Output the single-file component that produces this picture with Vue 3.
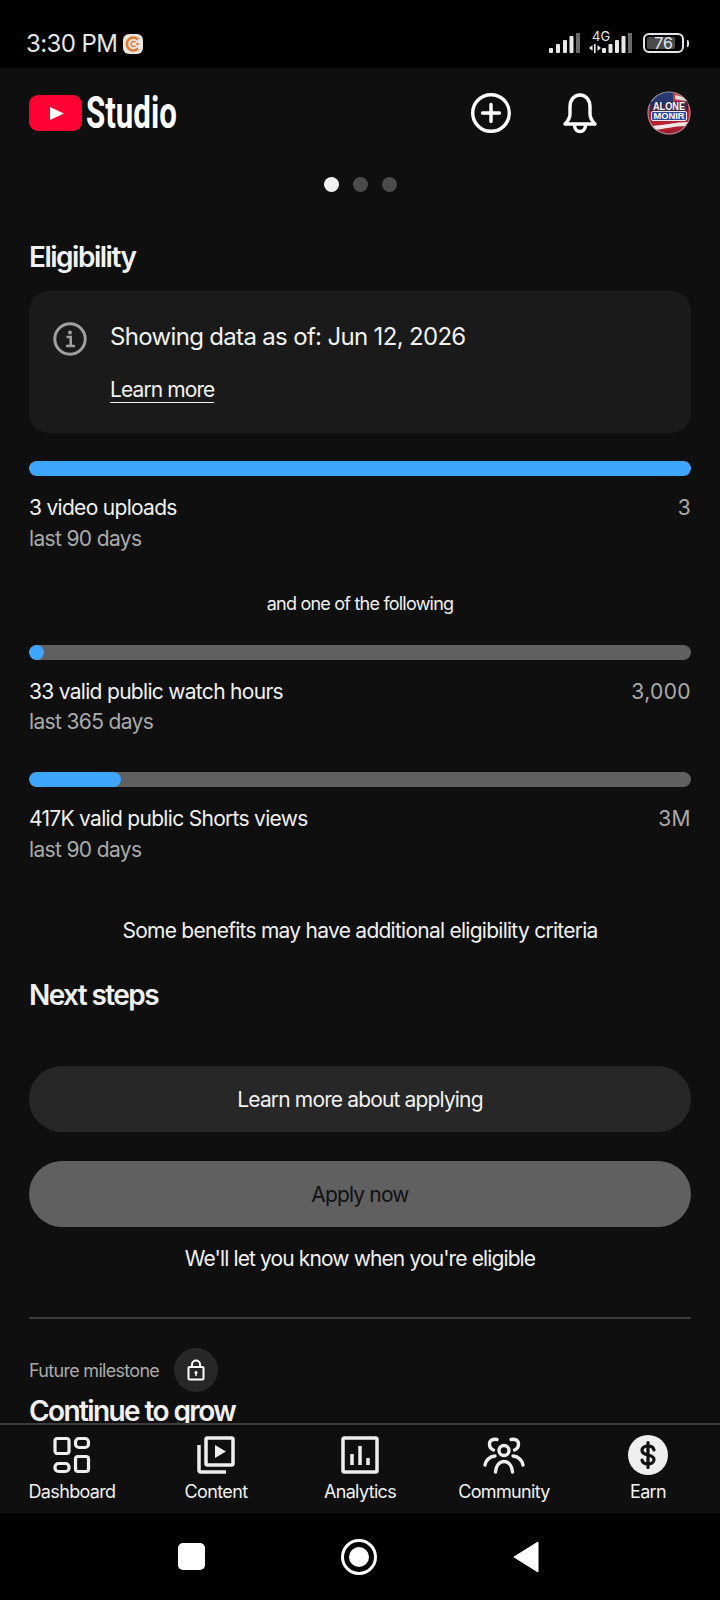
<template>
  <div class="screen">
    <div class="status-bar">
      <div class="status-left">
        <span class="time">3:30 PM</span>
        <svg class="app-badge" width="20" height="20" viewBox="0 0 20 20">
          <rect x="0" y="0" width="20" height="20" rx="6" fill="#e9e4de" />
          <path d="M15 5.500a6.500 6.500 0 1 0 0 9" fill="none" stroke="#e07a35" stroke-width="2.600" />
          <path d="M12.500 8.200a2.600 2.600 0 1 0 0 3.600" fill="none" stroke="#e07a35" stroke-width="1.400" />
          <circle cx="14.500" cy="10" r="1.300" fill="#e07a35" />
        </svg>
      </div>
      <div class="status-right">
        <svg width="31" height="20" viewBox="0 0 31 20">
          <rect x="0" y="15" width="4" height="5" rx="1" fill="#e8e8e8" />
          <rect x="7" y="11" width="4" height="9" rx="1" fill="#e8e8e8" />
          <rect x="14" y="7" width="4" height="13" rx="1" fill="#e8e8e8" />
          <rect x="20.500" y="3" width="4" height="17" rx="1" fill="#e8e8e8" />
          <rect x="27" y="0" width="4" height="20" fill="#6a6a6a" />
        </svg>
        <div class="net">
          <span class="net-label">4G</span>
          <svg width="43" height="20" viewBox="0 0 43 20">
            <path d="M0 15l3.500-3v6zM5 11h1.600v9H5zM8.500 12l3.500 3-3.500 3z" fill="#e8e8e8" />
            <rect x="13" y="15" width="4" height="5" rx="1" fill="#e8e8e8" />
            <rect x="19.500" y="11" width="4" height="9" rx="1" fill="#e8e8e8" />
            <rect x="26" y="7" width="4" height="13" rx="1" fill="#e8e8e8" />
            <rect x="32.500" y="3" width="4" height="17" rx="1" fill="#e8e8e8" />
            <rect x="39" y="0" width="4" height="20" fill="#6a6a6a" />
          </svg>
        </div>
        <div class="battery">
          <div class="battery-body">
            <div class="battery-fill"></div>
            <span class="battery-num">76</span>
          </div>
          <div class="battery-cap"></div>
        </div>
      </div>
    </div>

    <header class="header">
      <div class="logo">
        <svg width="53" height="36" viewBox="0 0 53 36">
          <rect width="53" height="36" rx="9" fill="#ff0033" />
          <path d="M21 12l14 6.500-14 6.500z" fill="#fff" />
        </svg>
        <span class="logo-text">Studio</span>
      </div>
      <div class="header-actions">
        <svg class="ic-plus" width="40" height="40" viewBox="0 0 40 40" fill="none" stroke="#fff" stroke-width="3.400">
          <circle cx="20" cy="20" r="18.300" />
          <path d="M20 11.500v17M11.500 20h17" stroke-linecap="round" />
        </svg>
        <svg class="ic-bell" width="36" height="42" viewBox="0 0 36 42" fill="none" stroke="#fff" stroke-width="3.400" stroke-linejoin="round">
          <path d="M3 32c3-3 5-5.500 5-10v-7C8 8 12 3 18 3s10 5 10 12v7c0 4.500 2 7 5 10z" />
          <path d="M12.500 33c0 4 2.500 6.500 5.500 6.500s5.500-2.500 5.500-6.500" />
        </svg>
        <svg class="avatar" width="44" height="44" viewBox="0 0 44 44">
          <defs>
            <clipPath id="av"><circle cx="22" cy="22" r="21.500" /></clipPath>
          </defs>
          <g clip-path="url(#av)">
            <rect width="44" height="44" fill="#b3212f" />
            <rect y="0" width="44" height="13" fill="#26386e" />
            <path d="M26 0l18 6v7H26z" fill="#c83a46" />
            <path d="M28 4l16 4v3L28 8z" fill="#e6dcdc" />
            <path d="M0 29h44v3C30 33 16 35 3 39z" fill="#b3212f" />
            <path d="M5 35c12-1 24-4 36-4l-3 4c-10 0-21 3-30 4z" fill="#f0e8e8" />
            <path d="M8 40c10 0 22-2 30-4v8H8z" fill="#a01f2d" />
          </g>
          <circle cx="22" cy="22" r="21" fill="none" stroke="#a8a8b0" stroke-width="1.200" opacity=".75" />
          <rect x="3" y="10.500" width="38" height="10" fill="#1f2a52" opacity=".75" />
          <rect x="4.500" y="20.500" width="35" height="9" rx="1.500" fill="#2c4a9e" stroke="#e8e8f0" stroke-width="1" />
          <text x="22" y="18.500" class="av-top" text-anchor="middle" textLength="32" lengthAdjust="spacingAndGlyphs">ALONE</text>
          <text x="22" y="28" class="av-bot" text-anchor="middle" textLength="31" lengthAdjust="spacingAndGlyphs">MONIR</text>
        </svg>
      </div>
    </header>

    <main class="content">
      <div class="dots">
        <span class="dot active"></span>
        <span class="dot"></span>
        <span class="dot"></span>
      </div>

      <h2 class="title">Eligibility</h2>

      <div class="info-card">
        <svg class="info-icon" width="34" height="34" viewBox="0 0 34 34" fill="none">
          <circle cx="17" cy="17" r="15.200" stroke="#a0a0a0" stroke-width="3" />
          <circle cx="17" cy="10.500" r="2" fill="#a0a0a0" />
          <path d="M13.500 15h4.200v8.500M13 24h9" stroke="#a0a0a0" stroke-width="2.600" />
        </svg>
        <div class="info-body">
          <div class="info-text">Showing data as of: Jun 12, 2026</div>
          <a class="info-link">Learn more</a>
        </div>
      </div>

      <div class="metric">
        <div class="bar"><div class="bar-fill" :style="{ width: '100%' }"></div></div>
        <div class="metric-row">
          <span class="metric-name">3 video uploads</span>
          <span class="metric-goal">3</span>
        </div>
        <div class="metric-sub">last 90 days</div>
      </div>

      <div class="or-line">and one of the following</div>

      <div class="metric">
        <div class="bar"><div class="bar-fill" :style="{ width: '2.2%' }"></div></div>
        <div class="metric-row">
          <span class="metric-name">33 valid public watch hours</span>
          <span class="metric-goal">3,000</span>
        </div>
        <div class="metric-sub">last 365 days</div>
      </div>

      <div class="metric metric-last">
        <div class="bar"><div class="bar-fill" :style="{ width: '13.9%' }"></div></div>
        <div class="metric-row">
          <span class="metric-name">417K valid public Shorts views</span>
          <span class="metric-goal">3M</span>
        </div>
        <div class="metric-sub">last 90 days</div>
      </div>

      <div class="benefits">Some benefits may have additional eligibility criteria</div>

      <h2 class="title next-title">Next steps</h2>

      <button class="pill pill-dark">Learn more about applying</button>
      <button class="pill pill-disabled">Apply now</button>
      <div class="eligible-note">We'll let you know when you're eligible</div>

      <div class="divider"></div>

      <div class="milestone">
        <span class="milestone-label">Future milestone</span>
        <span class="lock">
          <svg width="18" height="22" viewBox="0 0 18 22" fill="none" stroke="#fff" stroke-width="2">
            <rect x="1.500" y="8" width="15" height="12.500" rx="1" />
            <path d="M5 8V5.500a4 4 0 0 1 8 0V8" />
            <circle cx="9" cy="13.500" r="1.500" fill="#fff" stroke="none" />
            <path d="M9 14v3" stroke-width="1.400" />
          </svg>
        </span>
      </div>
      <h2 class="title grow-title">Continue to grow</h2>
    </main>

    <nav class="tabs">
      <div class="tab">
        <svg width="38" height="38" viewBox="0 0 38 38" fill="none" stroke="#eee" stroke-width="3.200">
          <rect x="2" y="2.500" width="14" height="15" rx="2.500" />
          <rect x="22.500" y="2.500" width="13" height="9" rx="3.500" />
          <rect x="2" y="27.500" width="14" height="8" rx="3.500" />
          <rect x="22.500" y="20.500" width="13" height="15" rx="2.500" />
        </svg>
        <span>Dashboard</span>
      </div>
      <div class="tab">
        <svg width="38" height="38" viewBox="0 0 38 38" fill="none" stroke="#eee" stroke-width="3.500">
          <rect x="9" y="2" width="27" height="27" rx="1.500" />
          <path d="M2 9v25a2 2 0 0 0 2 2h25" />
          <path d="M18 9l11 6.500-11 6.500z" fill="#eee" stroke="none" />
        </svg>
        <span>Content</span>
      </div>
      <div class="tab">
        <svg width="38" height="38" viewBox="0 0 38 38" fill="none" stroke="#eee" stroke-width="3.500">
          <rect x="2" y="2" width="34" height="34" rx="1.500" />
          <path d="M11 18v11M19 10v19M27 22v7" />
        </svg>
        <span>Analytics</span>
      </div>
      <div class="tab">
        <svg width="44" height="38" viewBox="0 0 44 38" fill="none" stroke="#eee" stroke-width="3.400" stroke-linecap="round">
          <circle cx="22" cy="14.500" r="5" />
          <path d="M13.500 36c0-6 4-10.500 8.500-10.500s8.500 4.500 8.500 10.500" />
          <path d="M15 3.500c-4-1-7.500 1-7.500 4.500 0 3 1.500 5 4 6" />
          <path d="M29 3.500c4-1 7.500 1 7.500 4.500 0 3-1.500 5-4 6" />
          <path d="M3 29c.5-4 4-8.500 10-9" />
          <path d="M41 29c-.5-4-4-8.500-10-9" />
        </svg>
        <span>Community</span>
      </div>
      <div class="tab">
        <svg width="40" height="40" viewBox="0 0 40 40">
          <circle cx="20" cy="20" r="20" fill="#eee" />
          <path d="M26 15c-.5-2.500-3-4-6-4s-6 1.500-6 4.500c0 6 12 3 12 9 0 3-3 4.500-6 4.500s-5.500-1.500-6-4M20 7.500v25" fill="none" stroke="#111" stroke-width="3.200" stroke-linecap="round" />
        </svg>
        <span>Earn</span>
      </div>
    </nav>

    <div class="system-nav">
      <div class="sys-square"></div>
      <div class="sys-circle"><div class="sys-circle-in"></div></div>
      <svg width="26" height="32" viewBox="0 0 26 32"><path d="M25 1v30L1 16z" fill="#fff" stroke="#fff" stroke-width="1" stroke-linejoin="round" /></svg>
    </div>
  </div>
</template>

<script setup>
</script>

<style>
html, body {
  margin: 0;
  background: #000;
}
</style>

<style scoped>
.screen {
  width: 720px;
  height: 1600px;
  display: flex;
  flex-direction: column;
  background: #0f0f0f;
  color: #f1f1f1;
  font-family: Inter, "Noto Sans", sans-serif;
  overflow: hidden;
}

.status-bar {
  height: 68px;
  flex: none;
  background: #000;
  display: flex;
  justify-content: space-between;
  align-items: flex-start;
  padding: 30px 31px 0 26px;
  box-sizing: border-box;
}
.status-left {
  display: flex;
  align-items: center;
  gap: 6px;
}
.time {
  font-size: 24px;
  line-height: 28px;
  color: #e6e6e6;
  letter-spacing: -0.6px;
}
.status-right {
  display: flex;
  align-items: flex-end;
  gap: 9px;
  margin-top: 3px;
}
.net {
  position: relative;
}
.net-label {
  position: absolute;
  top: -3px;
  left: 3px;
  font-size: 13px;
  line-height: 13px;
  color: #e6e6e6;
}
.net svg,
.status-right > svg {
  display: block;
}
.battery {
  display: flex;
  align-items: center;
  gap: 3px;
  margin-left: 2px;
}
.battery-body {
  position: relative;
  width: 41px;
  height: 20px;
  border: 2px solid #e6e6e6;
  border-radius: 6px;
  box-sizing: border-box;
}
.battery-fill {
  position: absolute;
  left: 2px;
  top: 2px;
  bottom: 2px;
  width: 28px;
  background: #4a4a4a;
  border-radius: 2px;
}
.battery-num {
  position: relative;
  display: block;
  text-align: center;
  font-size: 16px;
  line-height: 16px;
  color: #e6e6e6;
}
.battery-cap {
  width: 2px;
  height: 7px;
  background: #e6e6e6;
  border-radius: 0 2px 2px 0;
}

.header {
  height: 90px;
  flex: none;
  display: flex;
  justify-content: space-between;
  align-items: center;
  padding: 0 29px;
  box-sizing: border-box;
}
.logo {
  display: flex;
  align-items: center;
  gap: 4px;
}
.logo svg {
  display: block;
}
.logo-text {
  display: inline-block;
  font-family: Roboto, sans-serif;
  font-weight: 700;
  font-size: 44px;
  line-height: 44px;
  color: #fff;
  transform: scaleX(0.71);
  transform-origin: left center;
  width: 96px;
}
.header-actions {
  display: flex;
  align-items: center;
}
.header-actions svg {
  display: block;
}
.ic-plus {
  margin-right: 51px;
}
.ic-bell {
  margin-right: 49px;
}
.av-top {
  font-family: "Liberation Sans", sans-serif;
  font-size: 10px;
  font-weight: 700;
  fill: #fff;
}
.av-bot {
  font-family: "Liberation Sans", sans-serif;
  font-size: 9px;
  font-weight: 700;
  fill: #fff;
}

.content {
  flex: 1;
  min-height: 0;
  overflow: hidden;
  padding: 0 29px;
}
.dots {
  display: flex;
  justify-content: center;
  gap: 14px;
  margin-top: 19px;
}
.dot {
  width: 15px;
  height: 15px;
  border-radius: 50%;
  background: #4b4b4b;
}
.dot.active {
  background: #f1f1f1;
}
.title {
  margin: 0;
  font-size: 28px;
  line-height: 34px;
  font-weight: 600;
  letter-spacing: -1.6px;
  color: #f1f1f1;
}
.dots + .title {
  margin-top: 48px;
  letter-spacing: -1.5px;
}
.info-card {
  margin-top: 17px;
  height: 142px;
  box-sizing: border-box;
  background: #1a1a1a;
  border-radius: 20px;
  padding: 30px 24px 0 24px;
  display: flex;
  gap: 23px;
}
.info-icon {
  flex: none;
  margin-top: 1px;
}
.info-text {
  font-size: 24px;
  line-height: 32px;
  color: #f1f1f1;
  letter-spacing: -0.67px;
}
.info-link {
  display: inline-block;
  margin-top: 24px;
  font-size: 21px;
  line-height: 25px;
  letter-spacing: -0.9px;
  color: #f1f1f1;
  border-bottom: 1px solid #f1f1f1;
}
.metric {
  margin-top: 28px;
}
.bar {
  height: 15px;
  border-radius: 8px;
  background: #606060;
  overflow: hidden;
}
.bar-fill {
  height: 100%;
  background: #3ea6ff;
  border-radius: 8px;
}
.metric-row {
  display: flex;
  justify-content: space-between;
  margin-top: 18px;
  font-size: 21px;
  line-height: 28px;
  letter-spacing: -0.7px;
}
.metric-name {
  color: #f1f1f1;
}
.metric-goal {
  color: #aaa;
  letter-spacing: 0.4px;
}
.metric-sub {
  margin-top: 2.5px;
  font-size: 21px;
  line-height: 28px;
  letter-spacing: -0.65px;
  color: #aaa;
}
.or-line {
  margin-top: 39px;
  margin-bottom: 29px;
  text-align: center;
  font-size: 18px;
  line-height: 24px;
  letter-spacing: -0.78px;
  color: #f1f1f1;
}
.or-line + .metric {
  margin-top: 0;
}
.metric-last {
  margin-top: 36px;
}
.benefits {
  margin-top: 53.5px;
  text-align: center;
  font-size: 21px;
  line-height: 28px;
  letter-spacing: -0.74px;
  color: #f1f1f1;
}
.next-title {
  margin-top: 33px;
}
.pill {
  display: block;
  width: 100%;
  height: 66px;
  border: none;
  border-radius: 33px;
  font-family: inherit;
  font-size: 21px;
  letter-spacing: -0.85px;
}
.pill-dark {
  margin-top: 54px;
  background: #272727;
  color: #f1f1f1;
}
.pill-disabled {
  margin-top: 29px;
  background: #606060;
  color: #111;
}
.eligible-note {
  margin-top: 18px;
  text-align: center;
  font-size: 21px;
  line-height: 28px;
  letter-spacing: -0.88px;
  color: #f1f1f1;
}
.divider {
  margin-top: 44px;
  height: 2px;
  background: #3d3d3d;
}
.milestone {
  display: flex;
  align-items: center;
  gap: 15px;
  margin-top: 29px;
}
.milestone-label {
  font-size: 18px;
  letter-spacing: -0.7px;
  color: #aaa;
}
.lock {
  width: 44px;
  height: 44px;
  border-radius: 50%;
  background: #272727;
  display: flex;
  align-items: center;
  justify-content: center;
}
.grow-title {
  margin-top: 2px;
}

.tabs {
  height: 90px;
  flex: none;
  box-sizing: border-box;
  border-top: 2px solid #3d3d3d;
  display: grid;
  grid-template-columns: repeat(5, 144px);
  background: #0f0f0f;
}
.tab {
  display: flex;
  flex-direction: column;
  align-items: center;
  padding-top: 10px;
  position: relative;
}
.tab svg {
  display: block;
  height: 40px;
}
.tab span {
  margin-top: 5px;
  font-size: 18px;
  line-height: 24px;
  letter-spacing: -0.65px;
  color: #f1f1f1;
}

.system-nav {
  height: 87px;
  flex: none;
  background: #000;
  display: flex;
  align-items: center;
  justify-content: space-between;
  padding: 0 181px 0 178px;
  box-sizing: border-box;
}
.sys-square {
  width: 27px;
  height: 27px;
  border-radius: 5px;
  background: #fff;
}
.sys-circle {
  width: 36px;
  height: 36px;
  box-sizing: border-box;
  border: 3px solid #fff;
  border-radius: 50%;
  display: flex;
  align-items: center;
  justify-content: center;
}
.sys-circle-in {
  width: 20px;
  height: 20px;
  background: #fff;
  border-radius: 50%;
}
</style>
